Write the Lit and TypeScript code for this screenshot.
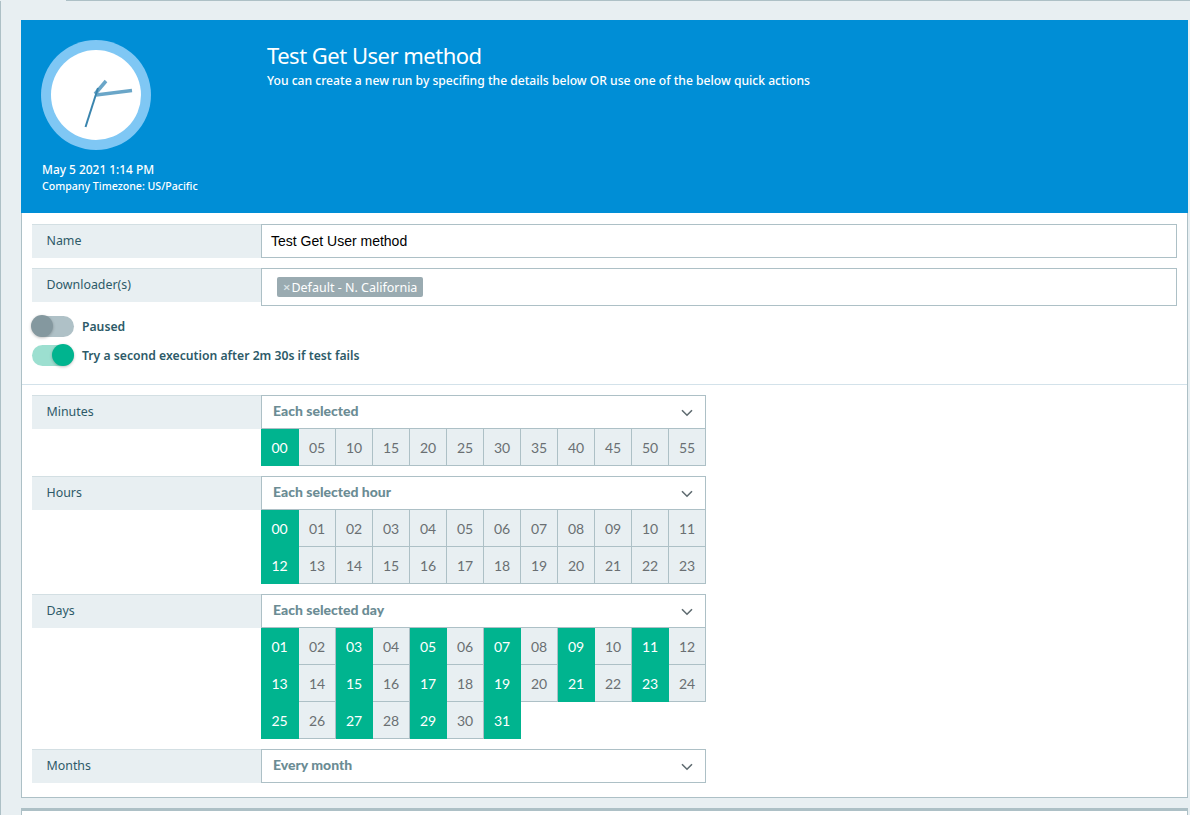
import { css, html, LitElement, svg } from "lit";
import { customElement } from "lit/decorators.js";

const pad = (n: number) => String(n).padStart(2, "0");

// selected values per schedule row
const MINUTES = Array.from({ length: 12 }, (_, i) => pad(i * 5));
const HOURS = Array.from({ length: 24 }, (_, i) => pad(i));
const DAYS = Array.from({ length: 31 }, (_, i) => pad(i + 1));

const chevron = svg`<svg class="chev" width="12" height="8" viewBox="0 0 12 8"><path d="M1 1.2 L6 6.2 L11 1.2" fill="none" stroke="#5f6b70" stroke-width="1.6"/></svg>`;

@customElement("app-root")
export class AppRoot extends LitElement {
  static styles = css`
    :host {
      display: block;
      height: 815px;
      overflow: hidden;
      background: #e8eff2;
      font-family: "Noto Sans", sans-serif;
      position: relative;
    }
    .edge-top {
      height: 1px;
      margin-left: 66px;
      background: #adc0c6;
    }
    .frame {
      border-left: 1px solid #adc0c6;
      padding: 19px 2px 0 20px;
    }
    .hero {
      height: 193px;
      background: #008ed6;
      color: #fff;
      display: flex;
      box-sizing: border-box;
      padding: 20px 0 0 20px;
    }
    .clock-col {
      width: 226px;
      flex: none;
    }
    .clock {
      display: block;
      width: 110px;
      height: 110px;
    }
    .when {
      font-size: 11.9px;
      font-weight: 500;
      line-height: 16px;
      margin: 11px 0 0 1px;
    }
    .tz {
      font-size: 10.6px;
      font-weight: 500;
      line-height: 16px;
      margin: 1px 0 0 1px;
    }
    h1 {
      margin: 2px 0 0;
      font-size: 22px;
      font-weight: 400;
      line-height: 26px;
      letter-spacing: -0.5px;
    }
    .sub {
      font-size: 12.13px;
      line-height: 16px;
      font-weight: 500;
      margin-top: 5px;
    }
    .panel {
      background: #fff;
      border: 1px solid #adc0c6;
      border-top: none;
      height: 585px;
      box-sizing: border-box;
      padding-top: 11px;
    }
    .row {
      display: flex;
      align-items: flex-start;
      padding: 0 10px;
      margin-bottom: 10px;
    }
    .label {
      width: 229px;
      height: 34px;
      flex: none;
      box-sizing: border-box;
      background: #e8eff2;
      border-top: 1px solid #d3dfe3;
      padding-left: 14.5px;
      font-size: 12.4px;
      line-height: 31px;
      color: #2d5a68;
    }
    .field {
      flex: 1;
      box-sizing: border-box;
      height: 34px;
      border: 1px solid #adc0c6;
      background: #fff;
      font-family: "Liberation Sans", sans-serif;
      font-size: 14px;
      line-height: 32px;
      padding-left: 9px;
      color: #000;
    }
    .field.tags {
      height: 38px;
      display: flex;
      align-items: flex-start;
      padding: 8px 0 0 15px;
      font-family: "Noto Sans", sans-serif;
    }
    .tag {
      display: inline-flex;
      align-items: center;
      box-sizing: border-box;
      gap: 1px;
      height: 20px;
      padding: 1px 6px 0;
      border-radius: 2px;
      background: #9aabb1;
      color: #fff;
      font-size: 12.5px;
      line-height: 19px;
    }
    .tag i {
      font-style: normal;
      font-size: 13px;
      font-weight: 600;
      color: #dbe3e6;
    }
    .toggles {
      margin-top: -1px;
      padding: 0 10px;
    }
    .toggle-row {
      display: flex;
      align-items: center;
      gap: 8px;
      height: 22px;
      margin-bottom: 7px;
      font-size: 12.2px;
      font-weight: 600;
      color: #2d5a68;
    }
    .switch {
      position: relative;
      width: 42px;
      height: 21px;
      border-radius: 11px;
      background: #afc1c7;
      flex: none;
    }
    .switch::after {
      content: "";
      position: absolute;
      top: -0.5px;
      left: -1px;
      width: 22px;
      height: 22px;
      border-radius: 50%;
      background: #84989f;
      box-shadow: 0 1px 3px rgba(0, 0, 0, 0.25);
    }
    .switch.on {
      background: #9cdfd0;
    }
    .switch.on::after {
      left: 20px;
      background: #00b48f;
    }
    hr {
      border: none;
      border-top: 1px solid #d3e2ea;
      margin: 18px 0 10px;
    }
    .sched {
      width: 445px;
      flex: none;
    }
    .select {
      box-sizing: border-box;
      height: 34px;
      border: 1px solid #adc0c6;
      padding: 0 12px 3px 11px;
      display: flex;
      align-items: center;
      justify-content: space-between;
      font-family: Lato, sans-serif;
      font-weight: 900;
      font-size: 14px;
      color: #6b8c94;
    }
    .select .chev {
      margin-top: 4px;
    }
    .grid {
      display: grid;
      grid-template-columns: 38px repeat(11, 37px);
      grid-auto-rows: 37px;
      font-family: Lato, sans-serif;
    }
    .cell {
      box-sizing: border-box;
      background: #e8eff2;
      border-right: 1px solid #adc0c6;
      border-bottom: 1px solid #adc0c6;
      font-size: 14px;
      line-height: 37px;
      text-align: center;
      color: #6a6f72;
    }
    .cell.on {
      background: #00b48f;
      border-color: #00b48f;
      color: #fff;
    }
    .next {
      margin: 10px 0 0;
      height: 20px;
      background: #fff;
      border-top: 3px solid #adc0c6;
      border-right: 1px solid #adc0c6;
      border-left: 1px solid #adc0c6;
    }
  `;

  private clock() {
    return html`<svg class="clock" viewBox="0 0 110 110">
      <circle cx="55" cy="55" r="55" fill="#7fc7f4"></circle>
      <circle cx="55" cy="55" r="45" fill="#fff"></circle>
      <line x1="54" y1="54" x2="65" y2="41" stroke="#6aa6c8" stroke-width="3.5"></line>
      <line x1="55" y1="55" x2="91" y2="50.5" stroke="#6aa6c8" stroke-width="3.5"></line>
      <line x1="57" y1="48" x2="44.5" y2="87" stroke="#3a85ae" stroke-width="2"></line>
    </svg>`;
  }

  private schedule(label: string, title: string, cells: string[], isOn: (i: number) => boolean) {
    return html`<div class="row">
      <div class="label">${label}</div>
      <div class="sched">
        <div class="select">${title}${chevron}</div>
        ${cells.length
          ? html`<div class="grid">
              ${cells.map(
                (c, i) => html`<div class="cell ${isOn(i) ? "on" : ""}">${c}</div>`
              )}
            </div>`
          : ""}
      </div>
    </div>`;
  }

  render() {
    return html`
      <div class="edge-top"></div>
      <div class="frame">
        <div class="hero">
          <div class="clock-col">
            ${this.clock()}
            <div class="when">May 5 2021 1:14 PM</div>
            <div class="tz">Company Timezone: US/Pacific</div>
          </div>
          <div>
            <h1>Test Get User method</h1>
            <div class="sub">You can create a new run by specifing the details below OR use one of the below quick actions</div>
          </div>
        </div>
        <div class="panel">
          <div class="row">
            <div class="label">Name</div>
            <div class="field">Test Get User method</div>
          </div>
          <div class="row">
            <div class="label">Downloader(s)</div>
            <div class="field tags"><span class="tag"><i>×</i>Default - N. California</span></div>
          </div>
          <div class="toggles">
            <div class="toggle-row"><span class="switch"></span>Paused</div>
            <div class="toggle-row"><span class="switch on"></span>Try a second execution after 2m 30s if test fails</div>
          </div>
          <hr />
          ${this.schedule("Minutes", "Each selected", MINUTES, (i) => i === 0)}
          ${this.schedule("Hours", "Each selected hour", HOURS, (i) => i % 12 === 0)}
          ${this.schedule("Days", "Each selected day", DAYS, (i) => i % 2 === 0)}
          ${this.schedule("Months", "Every month", [], () => false)}
        </div>
        <div class="next"></div>
      </div>
    `;
  }
}
